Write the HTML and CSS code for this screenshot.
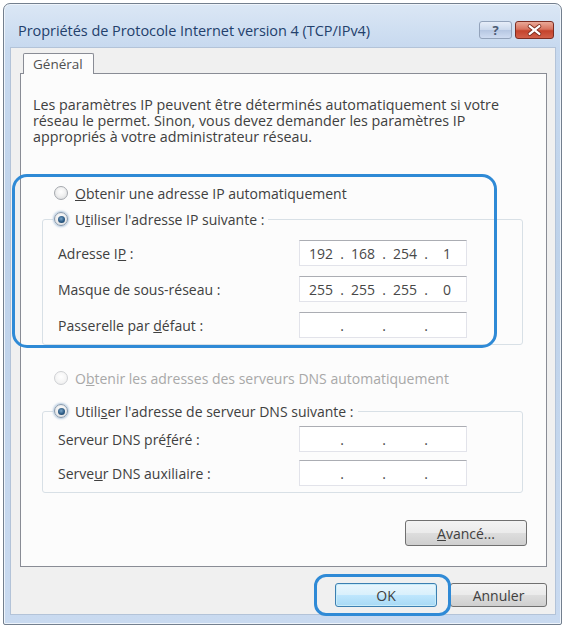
FILE: index.html
```html
<!DOCTYPE html>
<html lang="fr">
<head>
<meta charset="utf-8">
<title>Propriétés de Protocole Internet version 4 (TCP/IPv4)</title>
<link rel="stylesheet" href="styles.css">
</head>
<body>
<div class="window">
  <div class="titlebar">
    <span class="title">Propriétés de Protocole Internet version 4 (TCP/IPv4)</span>
    <div class="caption-btns">
      <span class="cbtn help">?</span>
      <span class="cbtn close">
        <svg width="38" height="18" viewBox="0 0 38 18">
          <path d="M14 5 L24 13 M24 5 L14 13" stroke="#7a2a1c" stroke-width="4" stroke-linecap="round"/>
          <path d="M14 5 L24 13 M24 5 L14 13" stroke="#ffffff" stroke-width="2.4" stroke-linecap="round"/>
        </svg>
      </span>
    </div>
  </div>
  <div class="client">
    <div class="tabs"><span class="tab">Général</span></div>
    <div class="panel">
      <p class="desc">Les paramètres IP peuvent être déterminés automatiquement si votre<br>réseau le permet. Sinon, vous devez demander les paramètres IP<br>appropriés à votre administrateur réseau.</p>

      <div class="radio-row"><span class="radio"></span><span><u>O</u>btenir une adresse IP automatiquement</span></div>

      <fieldset class="group">
        <legend class="legend"><span class="radio checked"></span><span>U<u>t</u>iliser l'adresse IP suivante :</span></legend>
        <div class="rows rows-ip">
          <div class="field-row"><span>Adresse I<u>P</u> :</span>
            <span class="ipbox"><span class="seg">192</span><span class="dot">.</span><span class="seg">168</span><span class="dot">.</span><span class="seg">254</span><span class="dot">.</span><span class="seg">1</span></span></div>
          <div class="field-row"><span>Masque de sous-réseau :</span>
            <span class="ipbox"><span class="seg">255</span><span class="dot">.</span><span class="seg">255</span><span class="dot">.</span><span class="seg">255</span><span class="dot">.</span><span class="seg">0</span></span></div>
          <div class="field-row"><span>Passerelle par <u>d</u>éfaut :</span>
            <span class="ipbox"><span class="seg"></span><span class="dot">.</span><span class="seg"></span><span class="dot">.</span><span class="seg"></span><span class="dot">.</span><span class="seg"></span></span></div>
        </div>
      </fieldset>

      <div class="radio-row disabled radio-dns"><span class="radio"></span><span>O<u>b</u>tenir les adresses des serveurs DNS automatiquement</span></div>

      <fieldset class="group group-dns">
        <legend class="legend"><span class="radio checked"></span><span>Utili<u>s</u>er l'adresse de serveur DNS suivante :</span></legend>
        <div class="rows rows-dns">
          <div class="field-row"><span>Serveur DNS pré<u>f</u>éré :</span>
            <span class="ipbox"><span class="seg"></span><span class="dot">.</span><span class="seg"></span><span class="dot">.</span><span class="seg"></span><span class="dot">.</span><span class="seg"></span></span></div>
          <div class="field-row"><span>Serve<u>u</u>r DNS auxiliaire :</span>
            <span class="ipbox"><span class="seg"></span><span class="dot">.</span><span class="seg"></span><span class="dot">.</span><span class="seg"></span><span class="dot">.</span><span class="seg"></span></span></div>
        </div>
      </fieldset>

      <div class="adv-row"><button class="btn adv"><u>A</u>vancé...</button></div>
    </div>
    <div class="footer">
      <button class="btn default">OK</button>
      <button class="btn cancel">Annuler</button>
    </div>
  </div>
</div>
<div class="hl hl-ip"></div>
<div class="hl hl-ok"></div>
</body>
</html>
```
FILE: styles.css
```css
html, body {
  margin: 0;
  padding: 0;
  background: #ffffff;
}

body {
  width: 565px;
  height: 628px;
  position: relative;
  overflow: hidden;
  font-family: "Open Sans", "DejaVu Sans", sans-serif;
  font-size: 14px;
  color: #404040;
}

.window {
  margin: 3px 0 0 3px;
  width: 559px;
  height: 622px;
  box-sizing: border-box;
  border: 1px solid #737f8e;
  border-radius: 7px 7px 2px 2px;
  background: linear-gradient(180deg, #dbe7f5 0%, #c7d9ef 7%, #bed2ea 40%, #c9daf0 100%);
  display: flex;
  flex-direction: column;
  box-shadow: inset 0 0 0 1px #eef4fb;
}

.titlebar {
  height: 36px;
  padding: 8px 7px 0 14px;
  display: flex;
  align-items: center;
  justify-content: space-between;
}

.title {
  font-size: 14.5px;
  color: #23406c;
  letter-spacing: -0.05px;
}

.caption-btns {
  display: flex;
  gap: 3px;
  align-self: center;
}

.cbtn {
  height: 18px;
  box-sizing: border-box;
  border-radius: 3px;
  display: flex;
  align-items: center;
  justify-content: center;
}

.help {
  width: 33px;
  border: 1px solid #93a3bb;
  background: linear-gradient(180deg, #e6edf8 0%, #ccd9ed 48%, #b6c7e2 52%, #cfdcf1 100%);
  color: #4b5a74;
  font-weight: bold;
  font-size: 13px;
  line-height: 16px;
}

.close {
  width: 39px;
  border: 1px solid #7d2d22;
  background: linear-gradient(180deg, #eaa998 0%, #d8735f 45%, #c4432c 55%, #d2604a 100%);
}

.close svg { display: block; }

.client {
  flex: 1;
  margin: 0 6px 10px 7px;
  background: #f0f0f0;
  box-shadow: 0 0 0 1px #b3c3d8;
  padding: 5px 8px 7px 9px;
  display: flex;
  flex-direction: column;
}

.tabs {
  display: flex;
  height: 20px;
  padding-left: 3px;
  position: relative;
  z-index: 1;
}

.tab {
  height: 21px;
  box-sizing: border-box;
  padding: 0 10px 0 9px;
  border: 1px solid #898c95;
  border-bottom: none;
  background: #fcfcfc;
  border-radius: 2px 2px 0 0;
  font-size: 13.5px;
  line-height: 20px;
  color: #505050;
}

.panel {
  flex: 1;
  background: #fcfcfc;
  border: 1px solid #898c95;
  display: flex;
  flex-direction: column;
}

.desc {
  margin: 23px 0 0 12px;
  line-height: 16px;
  font-size: 14.3px;
  color: #404040;
  white-space: nowrap;
}

.radio-row {
  margin: 38px 0 0 21px;
  padding-left: 12px;
  height: 20px;
  display: flex;
  align-items: center;
  gap: 7px;
  font-size: 14px;
  color: #404040;
}

.radio-dns { margin-top: 23px; }

.radio-row.disabled { color: #a8a8a8; }

.radio {
  width: 14px;
  height: 14px;
  box-sizing: border-box;
  border-radius: 50%;
  border: 1px solid #a5a9ae;
  background: radial-gradient(circle at 50% 40%, #ffffff 0%, #f1f1f1 45%, #d4d6d9 100%);
  flex: none;
  position: relative;
}

.disabled .radio {
  border-color: #cfd1d4;
  background: radial-gradient(circle at 50% 40%, #ffffff 0%, #f4f4f4 60%, #e3e4e6 100%);
}

.radio.checked {
  border-color: #8799ac;
  box-shadow: 0 0 2px 1px #b6cbe0;
}

.radio.checked::after {
  content: "";
  position: absolute;
  left: 2.5px;
  top: 2.5px;
  width: 7px;
  height: 7px;
  border-radius: 50%;
  background: radial-gradient(circle at 45% 40%, #7aa6c9 0%, #2b5a84 55%, #173a5c 100%);
}

.group {
  margin: 6px 0 0 21px;
  width: 481px;
  box-sizing: border-box;
  padding: 0;
  min-width: 0;
  border: 1px solid #d8e0e6;
  border-radius: 3px;
}

.group-dns { margin-top: 13px; }

.legend {
  margin-left: 10px;
  padding: 0 4px 0 1px;
  height: 20px;
  display: flex;
  align-items: center;
  gap: 7px;
  font-size: 14px;
  color: #404040;
}

.rows {
  padding: 0 55px 6px 15px;
  display: flex;
  flex-direction: column;
}

.rows-ip { margin-top: 11px; gap: 10px; }
.rows-dns { margin-top: 5px; gap: 8px; }

.field-row {
  height: 26px;
  display: flex;
  align-items: center;
  justify-content: space-between;
  font-size: 14px;
  color: #404040;
}

.ipbox {
  width: 168px;
  height: 26px;
  box-sizing: border-box;
  border: 1px solid #e2e3ea;
  border-top-color: #abadb3;
  background: #ffffff;
  padding-left: 4px;
  display: flex;
  align-items: center;
  font-size: 14px;
  color: #484848;
}

.seg {
  width: 34px;
  text-align: center;
}

.dot {
  width: 8px;
  text-align: center;
}

.adv-row {
  margin-top: 27px;
  display: flex;
  justify-content: flex-end;
  padding-right: 19px;
}

.btn {
  height: 26px;
  box-sizing: border-box;
  border: 1px solid #707070;
  border-radius: 3px;
  background: linear-gradient(180deg, #f3f3f3 0%, #ebebeb 48%, #dddddd 52%, #cfcfcf 100%);
  font-family: "Open Sans", "DejaVu Sans", sans-serif;
  font-size: 14px;
  color: #404040;
  padding: 0;
}

.adv { width: 122px; }

.footer {
  margin-top: 16px;
  height: 24px;
  display: flex;
  justify-content: flex-end;
  gap: 13px;
}

.footer .btn {
  width: 102px;
  height: 24px;
}

.footer .btn.cancel { width: 97px; }

.btn.default {
  border-color: #3c7fb1;
  background: linear-gradient(180deg, #eaf6fd 0%, #d9f0fc 48%, #bee6fd 52%, #a7d9f5 100%);
  box-shadow: inset 0 0 0 1px #c8ecf9;
}

.hl {
  position: absolute;
  box-sizing: border-box;
  border: 3px solid #2f8ad6;
  pointer-events: none;
}

.hl-ip {
  left: 12px;
  top: 174px;
  width: 485px;
  height: 174px;
  border-radius: 15px;
}

.hl-ok {
  left: 314px;
  top: 574px;
  width: 137px;
  height: 42px;
  border-radius: 12px;
}
```
